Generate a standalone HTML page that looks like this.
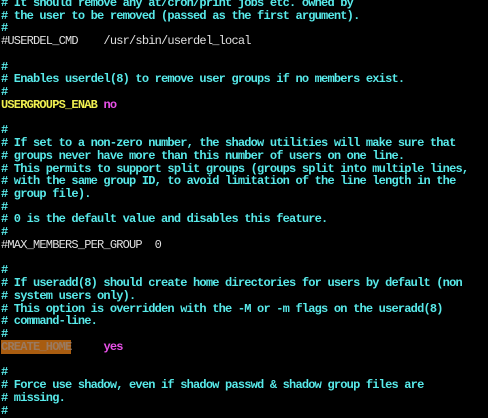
<!DOCTYPE html>
<html><head><meta charset="utf-8"><style>
html,body{margin:0;padding:0;background:#000;width:488px;height:414px;overflow:hidden}
pre{margin:0;position:absolute;left:1px;top:-3px;font-family:"Liberation Mono",monospace;font-size:12px;letter-spacing:-0.8px;line-height:12.73px;font-weight:bold;color:#58eaea;white-space:pre}
.y{color:#f0f050}.m{color:#e850e8}.w{color:#e0e0e0;font-weight:normal}
.h{background:#a85c10;color:#9a7a60}
</style></head><body><pre># It should remove any at/cron/print jobs etc. owned by
# the user to be removed (passed as the first argument).
#
<span class="w">#USERDEL_CMD    /usr/sbin/userdel_local</span>

#
# Enables userdel(8) to remove user groups if no members exist.
#
<span class="y">USERGROUPS_ENAB</span> <span class="m">no</span>

#
# If set to a non-zero number, the shadow utilities will make sure that
# groups never have more than this number of users on one line.
# This permits to support split groups (groups split into multiple lines,
# with the same group ID, to avoid limitation of the line length in the
# group file).
#
# 0 is the default value and disables this feature.
#
<span class="w">#MAX_MEMBERS_PER_GROUP  0</span>

#
# If useradd(8) should create home directories for users by default (non
# system users only).
# This option is overridden with the -M or -m flags on the useradd(8)
# command-line.
#
<span class="h">CREATE_HOME</span>     <span class="m">yes</span>

#
# Force use shadow, even if shadow passwd &amp; shadow group files are
# missing.
#</pre></body></html>
